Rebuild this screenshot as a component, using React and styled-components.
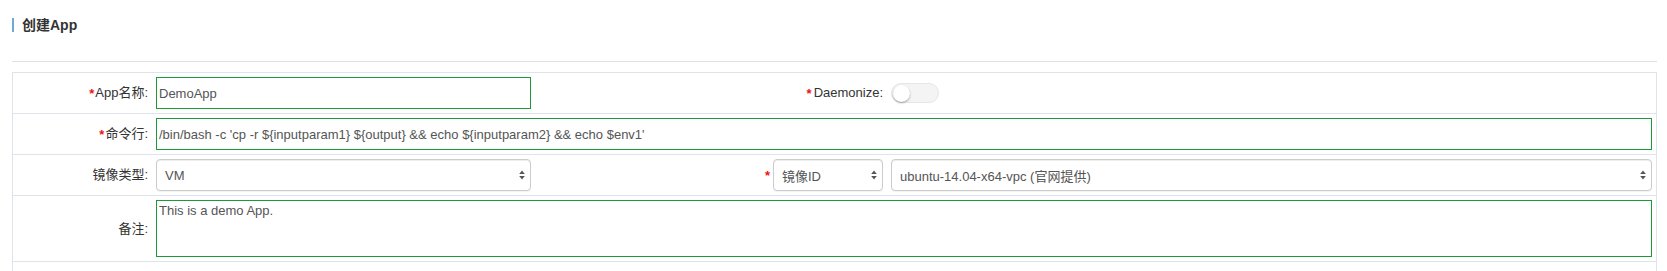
import React from 'react';
import styled, { createGlobalStyle } from 'styled-components';

const GlobalStyle = createGlobalStyle`
  body {
    margin: 0;
    background: #ffffff;
    font-family: "Liberation Sans", "Noto Sans CJK SC", sans-serif;
    font-size: 13px;
    color: #333333;
  }
`;

const Page = styled.div`
  padding: 0 10px 0 12px;
`;

const Title = styled.h3`
  margin: 18px 0 0 0;
  height: 14px;
  line-height: 14px;
  border-left: 2px solid #6fa9dc;
  padding-left: 8px;
  font-size: 14px;
  font-weight: bold;
  color: #333333;
`;

const Divider = styled.div`
  margin-top: 29px;
  height: 1px;
  background: #dfe2e6;
`;

const FormBox = styled.div`
  margin-top: 10px;
  border: 1px solid #dfe4ea;
`;

const Row = styled.div`
  display: grid;
  grid-template-columns: 135px 375px 344px 1fr;
  column-gap: 8px;
  align-items: center;
  padding: 4px 4px 4px 0;
  min-height: ${p => p.$min || 0}px;
  & + & {
    border-top: 1px solid #dfe4ea;
  }
`;

const Label = styled.label`
  display: flex;
  justify-content: flex-end;
  align-items: center;
  line-height: 16px;
  font-size: 13px;
  color: #333333;
  white-space: nowrap;
`;

const Star = styled.span`
  color: #ee1111;
  font-size: 13px;
  font-weight: bold;
  line-height: 16px;
  margin-right: ${p => p.$gap || 1}px;
  position: relative;
  top: 1px;
`;

const Cell = styled.div`
  display: flex;
  align-items: center;
  justify-content: ${p => (p.$end ? 'flex-end' : 'flex-start')};
  grid-column: ${p => p.$span || 'auto'};
  min-width: 0;
`;

const TextInput = styled.input`
  box-sizing: border-box;
  width: 100%;
  height: 32px;
  border: 1px solid #1c9a38;
  padding: 0 2px;
  font-family: inherit;
  font-size: 13px;
  color: #555555;
  background: #ffffff;
  outline: none;
`;

const TextArea = styled.textarea`
  box-sizing: border-box;
  width: 100%;
  height: 57px;
  border: 1px solid #1c9a38;
  padding: 2px 2px;
  font-family: inherit;
  font-size: 13px;
  line-height: 16px;
  color: #555555;
  resize: none;
  outline: none;
  display: block;
`;

const SelectBox = styled.div`
  box-sizing: border-box;
  display: flex;
  align-items: center;
  justify-content: space-between;
  width: ${p => (p.$w ? p.$w + 'px' : '100%')};
  height: 32px;
  padding: 0 5px 0 8px;
  border: 1px solid #cccccc;
  border-radius: 4px;
  box-shadow: inset 0 1px 1px rgba(0, 0, 0, 0.075), 0 1px 1px rgba(0, 0, 0, 0.05);
  background: #ffffff;
  color: #555555;
  font-size: 13px;
  white-space: nowrap;
`;

const Toggle = styled.div`
  box-sizing: border-box;
  width: 48px;
  height: 20px;
  border-radius: 10px;
  border: 1px solid #e6e6e6;
  background: #f4f4f4;
  display: flex;
  align-items: center;
  padding-left: 1px;
`;

const Knob = styled.div`
  width: 17px;
  height: 17px;
  border-radius: 50%;
  background: #ffffff;
  box-shadow: 0 1px 2px rgba(0, 0, 0, 0.35);
`;

const Arrows = () => (
  <svg width="6" height="10" viewBox="0 0 6 10">
    <path d="M3 0.5 L5.8 4 L0.2 4 Z" fill="#555555" />
    <path d="M3 9.5 L5.8 6 L0.2 6 Z" fill="#555555" />
  </svg>
);

const Select = ({ value, width }) => (
  <SelectBox $w={width}>
    <span>{value}</span>
    <Arrows />
  </SelectBox>
);

export default function App() {
  const command = "/bin/bash -c 'cp -r ${inputparam1} ${output} && echo ${inputparam2} && echo $env1'";
  return (
    <Page>
      <GlobalStyle />
      <Title>创建App</Title>
      <Divider />
      <FormBox>
        <Row>
          <Label><Star>*</Star>App名称:</Label>
          <Cell><TextInput defaultValue="DemoApp" /></Cell>
          <Label><Star $gap={2}>*</Star>Daemonize:</Label>
          <Cell><Toggle><Knob /></Toggle></Cell>
        </Row>
        <Row>
          <Label><Star>*</Star>命令行:</Label>
          <Cell $span="2 / -1"><TextInput defaultValue={command} /></Cell>
        </Row>
        <Row>
          <Label>镜像类型:</Label>
          <Cell><Select value="VM" /></Cell>
          <Cell $end>
            <Star $gap={3}>*</Star>
            <Select value="镜像ID" width={110} />
          </Cell>
          <Cell><Select value="ubuntu-14.04-x64-vpc (官网提供)" /></Cell>
        </Row>
        <Row>
          <Label>备注:</Label>
          <Cell $span="2 / -1"><TextArea defaultValue="This is a demo App." /></Cell>
        </Row>
        <Row $min={48} />
      </FormBox>
    </Page>
  );
}
